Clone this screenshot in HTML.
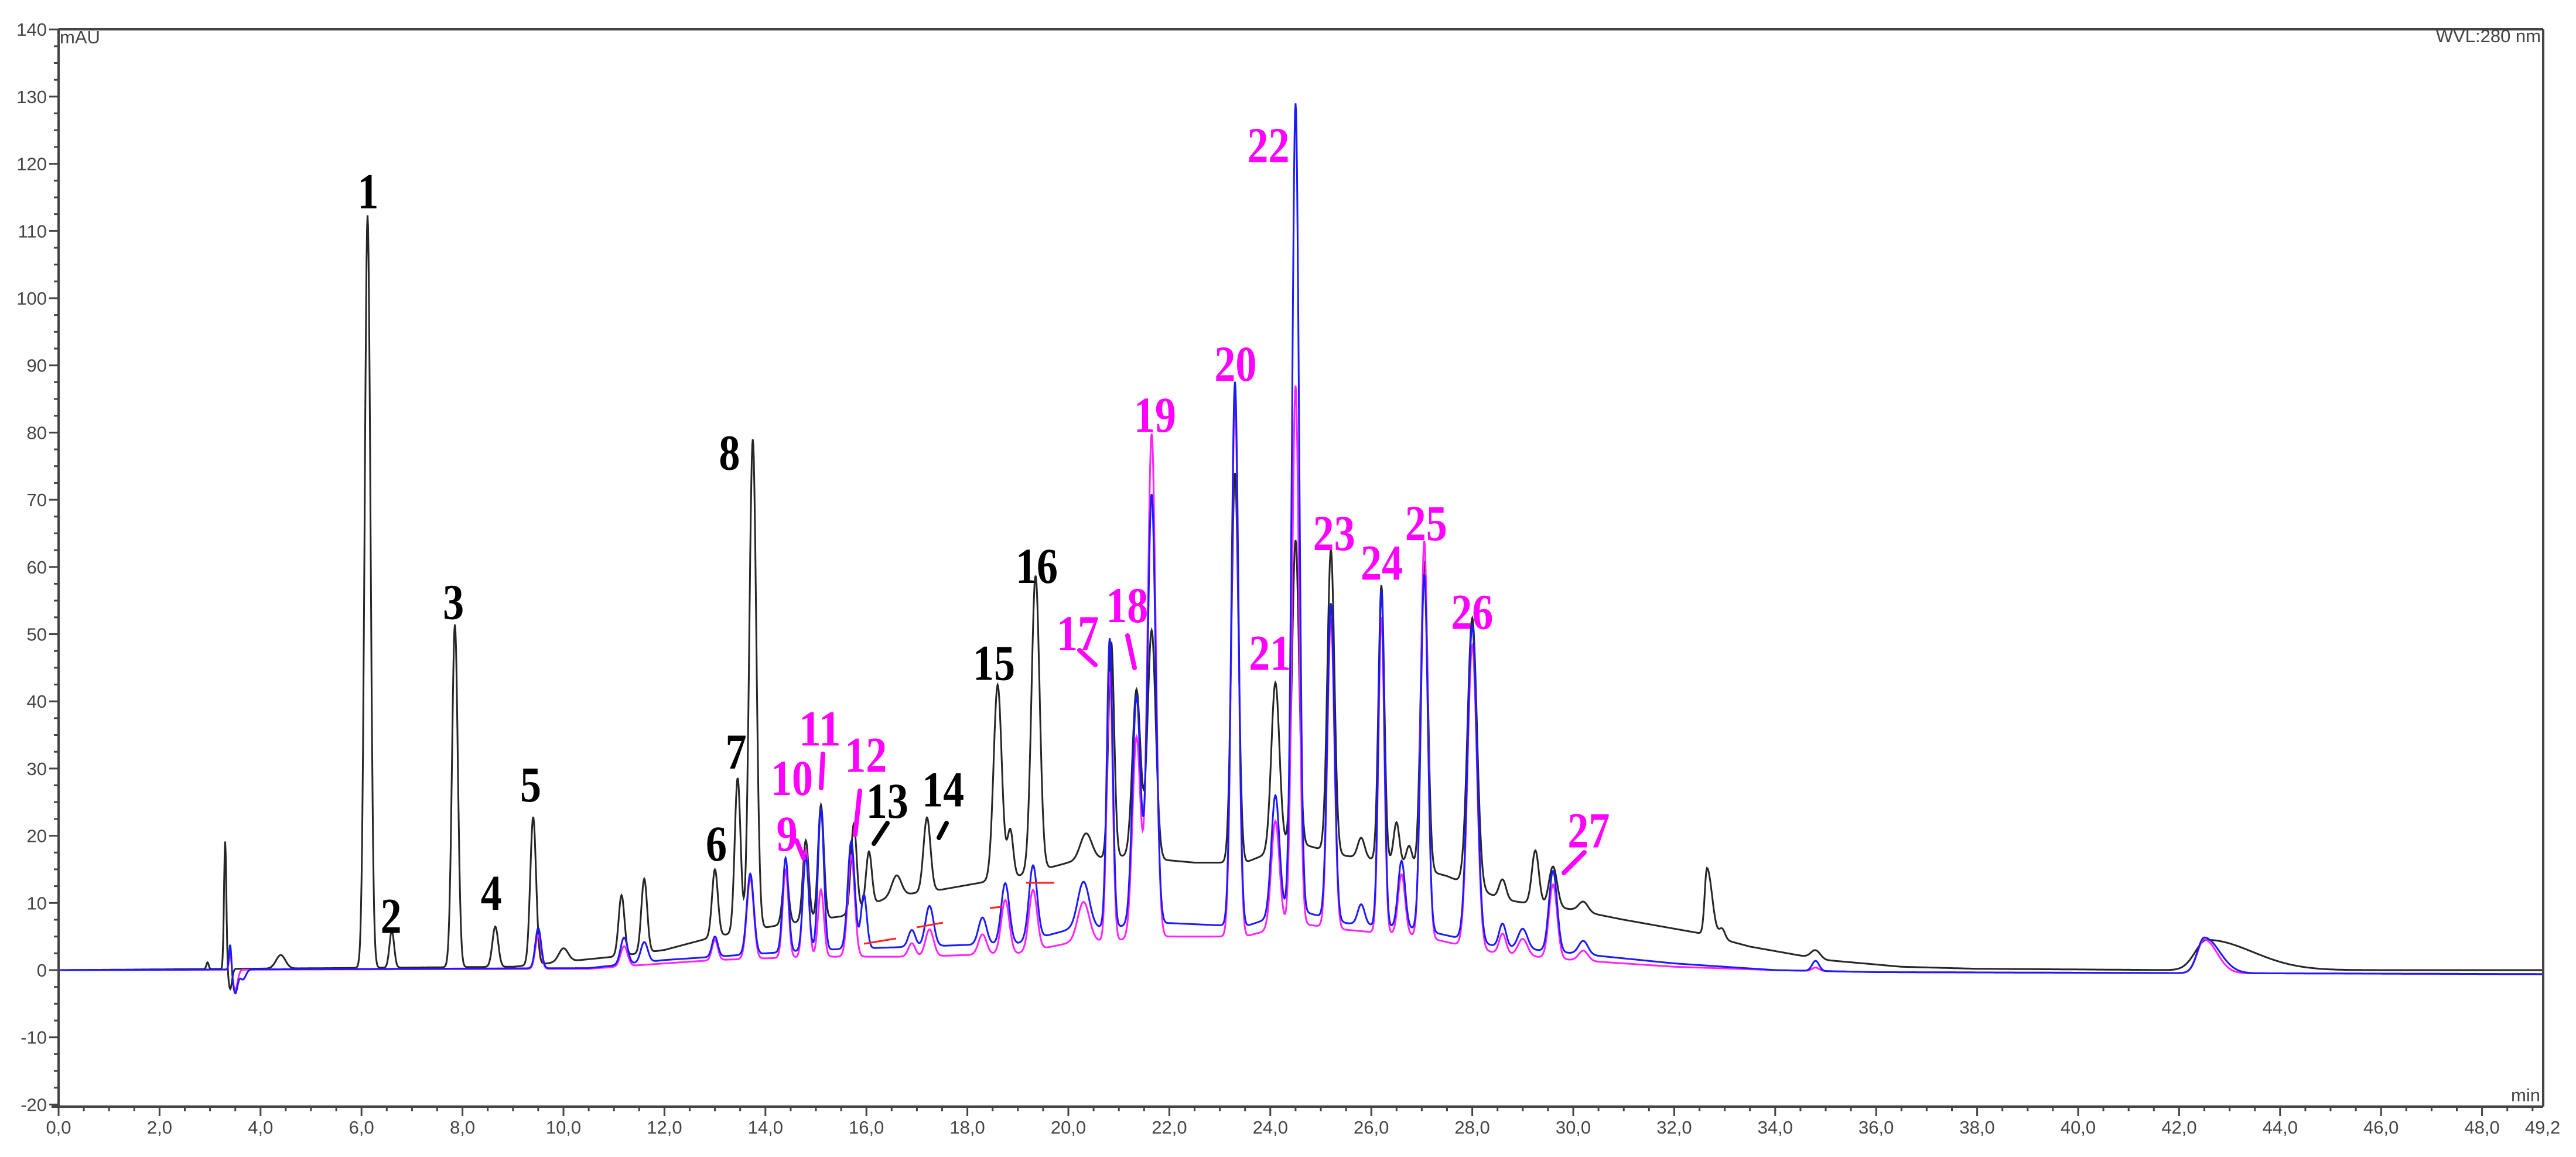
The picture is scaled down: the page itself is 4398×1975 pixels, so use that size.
<!DOCTYPE html>
<html><head><meta charset="utf-8"><style>
html,body{margin:0;padding:0;background:#fff;}
svg{display:block}
.ax{font-family:"Liberation Sans",sans-serif;font-size:31px;fill:#444}
.lb{font-family:"Liberation Serif",serif;font-weight:bold;font-size:86px}
</style></head><body>
<svg id="s" width="4398" height="1975" viewBox="0 0 4398 1975" xmlns="http://www.w3.org/2000/svg">
<rect width="4398" height="1975" fill="#fff"/>
<g id="axes"></g>
<path id="pb" fill="none" stroke="#000" stroke-width="3" stroke-opacity="0.85"/>
<path id="pm" fill="none" stroke="#ff22ff" stroke-width="3"/>
<path id="pl" fill="none" stroke="#1a1aff" stroke-width="3"/>
<g stroke="#ff2020" stroke-width="3">
<line x1="1475" y1="1611" x2="1530" y2="1602"/>
<line x1="1565" y1="1583" x2="1610" y2="1575"/>
<line x1="1690" y1="1550" x2="1710" y2="1548"/>
<line x1="1752" y1="1507" x2="1800" y2="1507"/>
</g>
<g stroke="#444" stroke-width="4" fill="none">
<line x1="100" y1="50" x2="4342" y2="50"/>
<line x1="100" y1="50" x2="100" y2="1889"/>
<line x1="4342" y1="50" x2="4342" y2="1889"/>
<line x1="88" y1="1889" x2="4342" y2="1889"/>
</g>
<text class="ax" x="102" y="74" font-size="26" fill="#333">mAU</text>
<text class="ax" x="4338" y="72" font-size="24" text-anchor="end" fill="#333">WVL:280 nm</text>
<text class="ax" x="4337" y="1880" font-size="26" text-anchor="end" fill="#333">min</text>
<g id="labels"></g>
<g stroke-width="8" stroke-linecap="round">
<line x1="1360" y1="1435" x2="1372" y2="1465" stroke="#ff00ff"/>
<line x1="1405" y1="1287" x2="1402" y2="1345" stroke="#ff00ff"/>
<line x1="1468" y1="1350" x2="1460" y2="1425" stroke="#ff00ff"/>
<line x1="1492" y1="1440" x2="1515" y2="1405" stroke="#000"/>
<line x1="1603" y1="1430" x2="1616" y2="1405" stroke="#000"/>
<line x1="1843" y1="1110" x2="1870" y2="1135" stroke="#ff00ff"/>
<line x1="1925" y1="1085" x2="1937" y2="1140" stroke="#ff00ff"/>
<line x1="2670" y1="1490" x2="2705" y2="1455" stroke="#ff00ff"/>
</g>
</svg>
<script>
var X=function(t){return 100+86.2*t;};
var Y=function(v){return 1656-v*11.47;};
var NS="http://www.w3.org/2000/svg";
function el(p,n,a,txt){var e=document.createElementNS(NS,n);for(var k in a)e.setAttribute(k,a[k]);if(txt!=null)e.textContent=txt;p.appendChild(e);return e;}
var ax=document.getElementById("axes");
for(var v=-20;v<=140;v+=2.5){var y=Y(v);var maj=(v%10===0);
 el(ax,"line",{x1:maj?84:92,y1:y,x2:100,y2:y,stroke:"#444","stroke-width":3});
 if(maj)el(ax,"text",{class:"ax",x:80,y:y+11,"text-anchor":"end"},String(v));}
for(var t=0;t<=49.2;t+=0.5){var x=X(t);var maj=(Math.round(t*2)%4===0);
 el(ax,"line",{x1:x,y1:1889,x2:x,y2:maj?1905:1897,stroke:"#444","stroke-width":3});
 if(maj)el(ax,"text",{class:"ax",x:x,y:1935,"text-anchor":"middle"},t.toFixed(1).replace(".",","));}
el(ax,"text",{class:"ax",x:X(49.2),y:1935,"text-anchor":"middle"},"49,2");
function interp(k,t){if(t<=k[0][0])return k[0][1];for(var i=1;i<k.length;i++){if(t<=k[i][0]){var a=k[i-1],b=k[i];return a[1]+(b[1]-a[1])*(t-a[0])/(b[0]-a[0]);}}return k[k.length-1][1];}
function build(base,peaks,id){var d="";for(var t=0;t<=49.2;t+=0.01){var v=interp(base,t);
 for(var i=0;i<peaks.length;i++){var p=peaks[i];var s=(p[2]||0.05)*1.15;var z=(t-p[0]);if(p[3]&&z>0)s=p[3];z/=s;if(Math.abs(z)<6)v+=p[1]*Math.exp(-0.5*z*z);}
 d+=(t===0?"M":"L")+X(t).toFixed(1)+","+Y(v).toFixed(1);}
 document.getElementById(id).setAttribute("d",d);}
var bb=[[0,0],[9,0.5],[11,2],[12,3],[13,5],[14.5,7],[15.5,8],[16.5,11],[17.5,12],[19,14],[20,16],[21,17],[22.5,16],[23.5,16],[24.5,19],[25.5,17],[26.5,16],[27.5,14],[28.6,10.5],[30,9],[31,7.5],[32.5,5.5],[33.5,3.5],[35,1.5],[36.5,0.5],[38,0.2],[42,0],[49.2,0]];
var bl=[[0,0],[10.5,0.3],[12,1.5],[13,2],[15,3],[17,3.5],[19,4],[20,6],[22,7],[23.5,6.5],[24.5,9],[25.5,7],[27,6],[28.5,3.5],[30,2.5],[32,1],[34,0],[36,-0.3],[49.2,-0.6]];
var bm=[[0,0],[10.5,0.2],[12,1],[13,1.5],[15,2],[17,2],[19,2.5],[20,4],[22,5],[23.5,5],[24.5,7],[25.5,6],[27,5],[28.5,2.5],[30,1.5],[32,0.5],[34,0],[36,-0.3],[49.2,-0.6]];
var pkb=[[3.3,19,0.02],[3.4,-3,0.03],[2.95,1,0.02],[4.4,2,0.08],[6.12,112,0.05],[6.6,5.5,0.04],[7.85,51,0.05],[8.65,6,0.05],[9.4,22,0.05],[10.0,2,0.08],[11.15,9,0.05],[11.6,11,0.05],[13.0,10,0.05],[13.45,23,0.05],[13.75,73,0.06],[14.4,8,0.05],[14.8,12,0.05],[15.1,17,0.05],[15.75,13,0.05],[16.05,8,0.05],[16.6,3,0.08],[17.2,11,0.06],[18.6,29,0.07],[18.85,7,0.05],[19.35,44,0.07],[20.35,4,0.1],[20.85,32,0.05],[21.35,25,0.07],[21.65,34,0.07],[23.3,58,0.06],[24.1,25,0.07],[24.5,45,0.06],[25.2,45,0.06],[25.8,3,0.06],[26.2,41,0.05],[26.5,6,0.05],[26.75,3,0.05],[27.05,46,0.06],[28.0,40,0.08],[28.6,3,0.06],[29.25,8,0.06],[29.6,6,0.07],[30.2,1.5,0.08],[32.65,10,0.04,0.1],[32.95,1.5,0.05],[34.8,1.2,0.08],[42.55,4.5,0.2,0.9]];
var pkl=[[3.4,4,0.02],[3.5,-3.5,0.04],[3.65,-1.5,0.05],[9.5,6,0.05],[11.2,4,0.06],[11.6,3,0.06],[13.0,3,0.05],[13.7,12,0.06],[14.4,14,0.05],[14.8,14,0.05],[15.1,21,0.05],[15.7,16,0.06],[15.95,8,0.05],[16.9,2.5,0.06],[17.25,6,0.07],[18.3,4,0.07],[18.75,9,0.07],[19.3,11,0.07],[20.3,7,0.1],[20.82,43,0.05],[21.35,34,0.07],[21.65,64,0.07],[23.3,81,0.06],[24.1,18,0.07],[24.5,120,0.06],[25.2,47,0.06],[25.8,3,0.06],[26.2,50,0.05],[26.6,10,0.06],[27.05,53,0.06],[28.0,47,0.08],[28.6,3.5,0.06],[29.0,3,0.08],[29.6,12,0.07],[30.2,2,0.08],[34.8,1.5,0.06],[42.5,5.3,0.12,0.3]];
var pkm=[[3.4,3,0.02],[3.5,-3,0.04],[9.5,5,0.05],[11.2,3,0.06],[13.0,3,0.05],[13.7,12,0.06],[14.4,13,0.05],[14.8,16,0.05],[15.1,10,0.05],[15.7,15,0.06],[16.9,2,0.06],[17.25,4,0.07],[18.3,3,0.07],[18.75,8,0.07],[19.3,9,0.07],[20.3,6,0.1],[20.82,40,0.05],[21.35,30,0.07],[21.65,75,0.07],[23.3,80,0.06],[24.1,16,0.07],[24.5,80,0.06],[25.2,46,0.06],[26.2,47,0.05],[26.6,9,0.06],[27.05,59,0.06],[28.0,45,0.08],[28.6,3,0.06],[29.0,2.5,0.08],[29.6,11,0.07],[30.2,1.5,0.08],[34.8,0.5,0.06],[42.5,5.0,0.12,0.25]];
build(bb,pkb,"pb");build(bm,pkm,"pm");build(bl,pkl,"pl");
var L=[["1",224,116,0],["2",238,557,0],["3",276,366,0],["4",299,543,0],["5",323,477,0],["6",436,513,0],["7",448,457,0],["8",444,275,0],["9",479,507,1],["10",482,473,1],["11",499,443,1],["12",527,459,1],["13",540,487,0],["14",574,480,0],["15",605,403,0],["16",631,344,0],["17",656,385,1],["18",686,368,1],["19",703,252,1],["20",752,221,1],["21",773,397,1],["22",772,88,1],["23",812,324,1],["24",841,342,1],["25",868,318,1],["26",896,372,1],["27",967,505,1]];
var lg=document.getElementById("labels");
L.forEach(function(l){var w=l[0].length*36;el(lg,"text",{class:"lb",x:l[1]*2.805-w/2,y:l[2]*2.805+30,fill:l[3]?"#ff00ff":"#000",textLength:w,lengthAdjust:"spacingAndGlyphs"},l[0]);});
</script>
</body></html>
